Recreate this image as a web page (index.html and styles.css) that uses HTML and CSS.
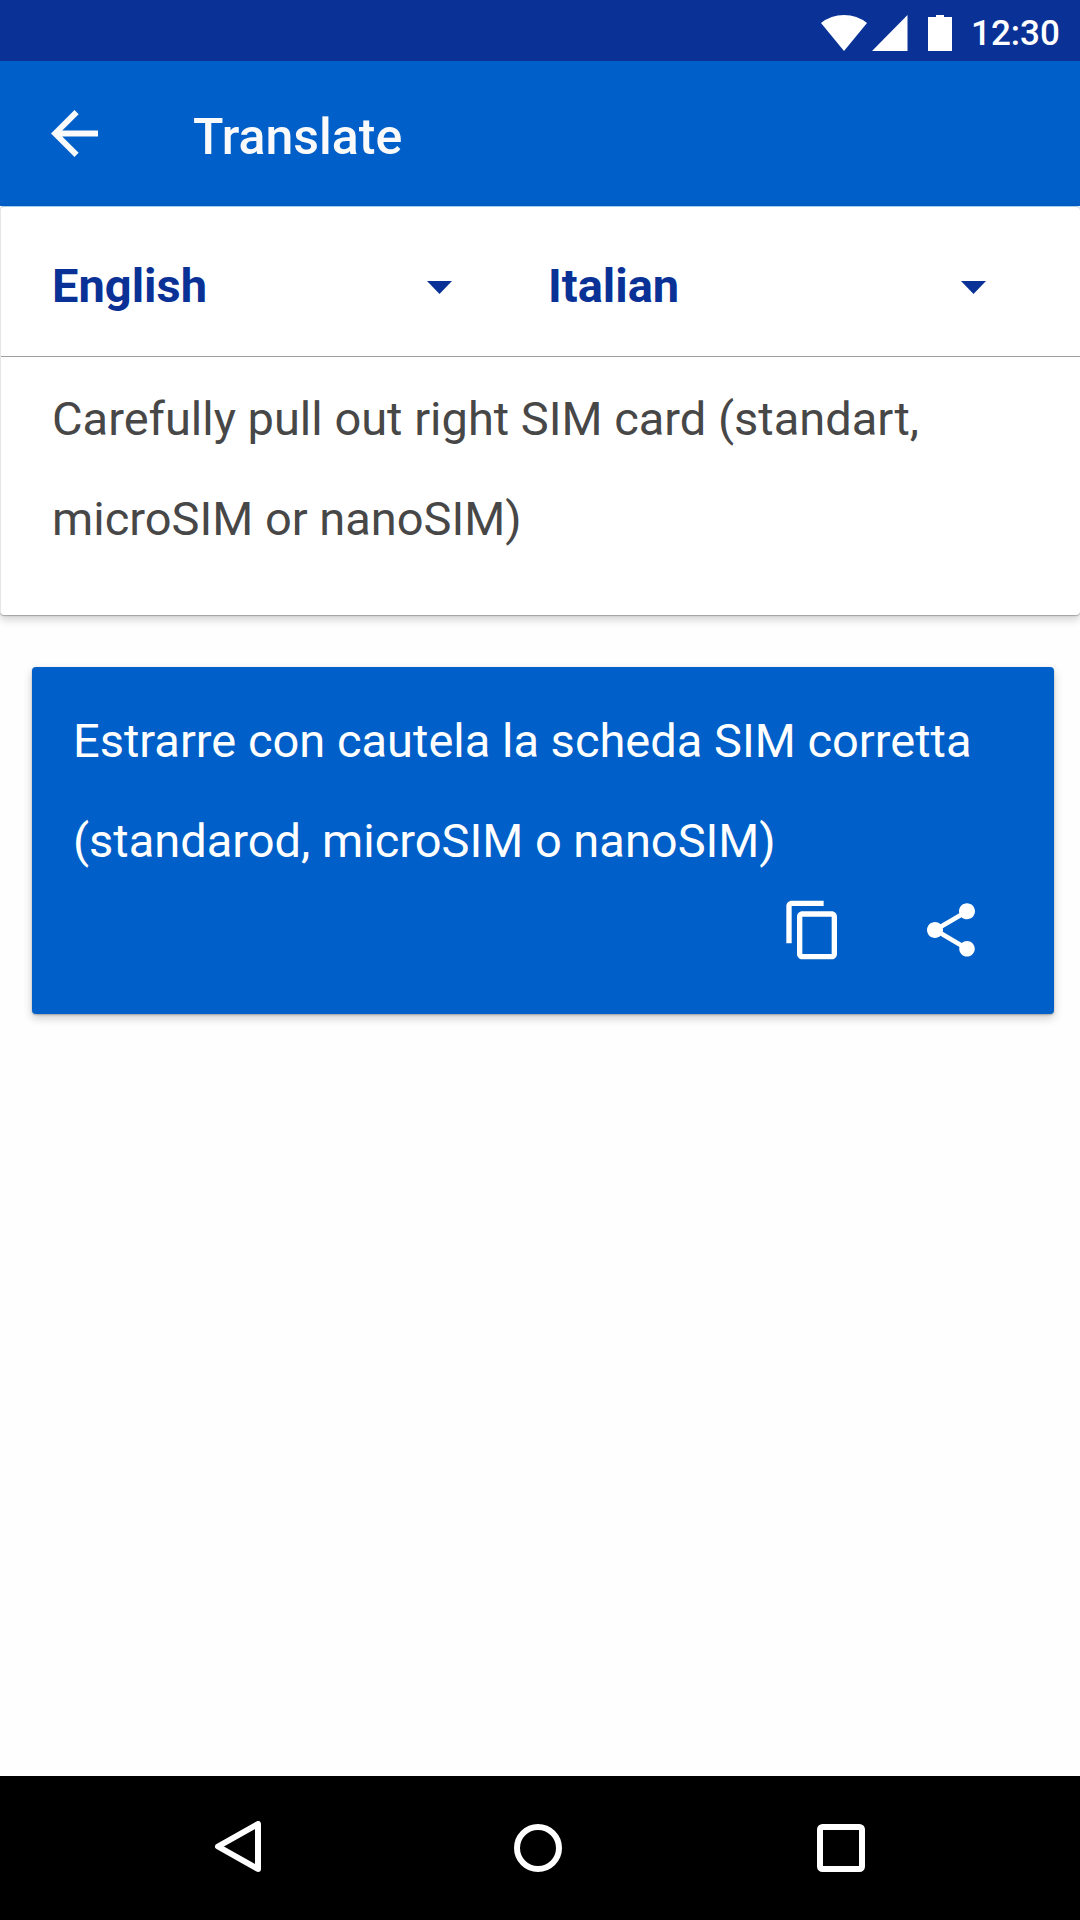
FILE: index.html
```
<!DOCTYPE html>
<html lang="en">
<head>
<meta charset="utf-8">
<title>Translate</title>
<link rel="stylesheet" href="styles.css">
</head>
<body>
<div class="screen">
  <header class="status-bar">
    <svg class="wifi" viewBox="0 0 46 36"><path d="M0 8Q10 0 23 0T46 8L23 36Z"/></svg>
    <svg class="signal" viewBox="0 0 36 36"><path d="M0 36L35.500 0V36Z"/></svg>
    <svg class="battery" viewBox="0 0 24 36"><path d="M0 2H8V0H16V2H24V36H0Z"/></svg>
    <span class="clock">12:30</span>
  </header>
  <div class="app-bar">
    <svg class="back" viewBox="4 4 16 16"><path d="M20 11H7.830l5.590-5.590L12 4l-8 8 8 8 1.410-1.410L7.830 13H20z"/></svg>
    <h1 class="title">Translate</h1>
  </div>
  <main class="content">
    <section class="source-card">
      <div class="languages">
        <div class="language from"><span class="name">English</span><svg class="caret" viewBox="0 0 25 13"><path d="M0 0H25L12.500 13Z"/></svg></div>
        <div class="language to"><span class="name">Italian</span><svg class="caret" viewBox="0 0 25 13"><path d="M0 0H25L12.500 13Z"/></svg></div>
      </div>
      <p class="phrase source">Carefully pull out right SIM card (standart,<br>microSIM or nanoSIM)</p>
    </section>
    <section class="result-card">
      <p class="phrase">Estrarre con cautela la scheda SIM corretta<br>(standarod, microSIM o nanoSIM)</p>
      <div class="actions">
        <svg class="action" viewBox="0 0 24 24"><path d="M16 1H4c-1.100 0-2 .9-2 2v14h2V3h12V1zm3 4H8c-1.100 0-2 .9-2 2v14c0 1.100.9 2 2 2h11c1.100 0 2-.9 2-2V7c0-1.100-.9-2-2-2zm0 16H8V7h11v14z"/></svg>
        <svg class="action" viewBox="0 0 24 24"><path d="M18 16.080c-.76 0-1.440.3-1.960.77L8.910 12.700c.05-.23.09-.46.09-.7s-.04-.47-.09-.7l7.050-4.110c.54.5 1.250.81 2.040.81 1.660 0 3-1.340 3-3s-1.340-3-3-3-3 1.340-3 3c0 .24.04.47.09.7L8.040 9.810C7.500 9.310 6.790 9 6 9c-1.660 0-3 1.340-3 3s1.340 3 3 3c.79 0 1.500-.31 2.040-.81l7.120 4.160c-.05.21-.08.43-.08.65 0 1.610 1.310 2.920 2.920 2.920 1.610 0 2.920-1.310 2.920-2.920s-1.310-2.920-2.920-2.920z"/></svg>
      </div>
    </section>
  </main>
  <nav class="nav-bar">
    <svg class="nav-back" viewBox="0 0 46 51"><path d="M3 25.500L43 3V48Z"/></svg>
    <svg class="nav-home" viewBox="0 0 48 48"><circle cx="24" cy="24" r="21"/></svg>
    <svg class="nav-recent" viewBox="0 0 48 48"><rect x="3" y="3" width="42" height="42" rx="2.500"/></svg>
  </nav>
</div>
</body>
</html>
```
FILE: styles.css
```
* { box-sizing: border-box; }
body { margin: 0; background: #fff; font-family: Roboto, sans-serif; }
svg { display: block; flex: none; fill: #fff; }
h1, p { margin: 0; }

.screen { width: 1080px; height: 1920px; display: flex; flex-direction: column; background: #fefefe; overflow: hidden; }

.status-bar { height: 61px; flex: none; display: flex; padding: 15px 0 0 821px; background: #0a3296; color: #fff; }
.wifi { width: 46px; height: 36px; }
.signal { width: 36px; height: 36px; margin-left: 4.5px; }
.battery { width: 24px; height: 36px; margin-left: 20.5px; }
.clock { margin-left: 19px; font-size: 35px; line-height: 38px; font-weight: 500; white-space: nowrap; }

.app-bar { height: 145px; flex: none; display: flex; padding-left: 51px; background: #005fc8; color: #fafafa; }
.back { width: 47px; height: 47px; margin-top: 49px; fill: #fafafa; }
.title { margin: 46px 0 0 95px; font-size: 50px; line-height: 60px; font-weight: 500; }

.content { flex: 1; display: flex; flex-direction: column; }
.source-card { height: 409px; background: #fff; border-top: 1px solid #a9cbee; border-left: 1px solid #e6e6e6; border-radius: 4px; box-shadow: 0 1px 1px rgba(0,0,0,.25), 0 4px 10px rgba(0,0,0,.2); }
.languages { height: 150px; display: flex; border-bottom: 1px solid #9e9e9e; }
.language { display: flex; color: #0a3296; }
.from { width: 497px; padding-left: 51px; }
.to { flex: 1; padding-left: 50px; }
.name { width: 375px; padding-top: 51px; font-size: 47px; line-height: 56px; font-weight: 700; }
.to .name { width: 413px; }
.caret { width: 25px; height: 13px; margin-top: 74px; fill: #0a3296; }
.phrase { font-size: 47px; line-height: 100px; white-space: nowrap; }
.source { padding: 12px 0 0 51px; color: #474747; }

.result-card { width: 1022px; height: 347px; margin: 52px 0 0 32px; padding: 24px 71px 0 41px; background: #005fc8; color: #fff; border-radius: 4px; box-shadow: 0 1px 2px rgba(0,0,0,.25), 0 4px 10px rgba(0,0,0,.2); }
.actions { display: flex; justify-content: flex-end; gap: 74px; margin-top: 6.5px; }
.action { width: 64px; height: 64px; }

.nav-bar { height: 144px; flex: none; display: flex; padding: 48px 0 0 215px; background: #000; }
.nav-bar svg { fill: none; stroke: #fff; stroke-width: 6px; stroke-linejoin: round; }
.nav-back { width: 46px; height: 51px; margin-top: -3px; }
.nav-home { width: 48px; height: 48px; margin-left: 253px; }
.nav-recent { width: 48px; height: 48px; margin-left: 255px; }
```
